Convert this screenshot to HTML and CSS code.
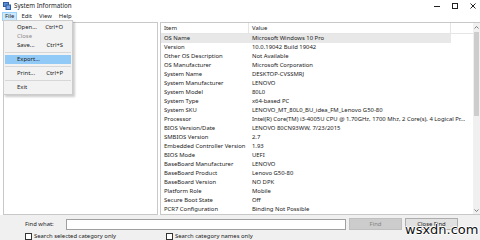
FILE: index.html
```html
<!DOCTYPE html>
<html lang="en">
<head>
    <meta charset="UTF-8">
    <title>System Information</title>
    <link rel="stylesheet" href="styles.css">
</head>
<body>
    <div class="window">
        <div class="titlebar">
            <svg class="app-icon" width="8" height="8" viewBox="0 0 8 8">
                <rect x="0.5" y="0.5" width="5" height="4" fill="#5b8fd6" stroke="#2c5aa0" stroke-width="1"/>
                <rect x="3" y="3" width="4.5" height="4.5" fill="#7aa7e6" stroke="#2c5aa0" stroke-width="1"/>
            </svg>
            <span class="title">System Information</span>
            <div class="controls">
                <svg width="8" height="8" viewBox="0 0 8 8"><line x1="1" y1="4.5" x2="7" y2="4.5" stroke="#222" stroke-width="1"/></svg>
                <svg width="8" height="8" viewBox="0 0 8 8"><rect x="1.5" y="1.5" width="5" height="5" fill="none" stroke="#222" stroke-width="1"/></svg>
                <svg width="8" height="8" viewBox="0 0 8 8"><path d="M1.5 1.5 L6.5 6.5 M6.5 1.5 L1.5 6.5" stroke="#222" stroke-width="1"/></svg>
            </div>
        </div>

        <div class="menubar">
            <span class="menu active">File</span>
            <span class="menu">Edit</span>
            <span class="menu">View</span>
            <span class="menu">Help</span>
        </div>

        <div class="main">
            <div class="tree"></div>
            <div class="details">
                <div class="list">
                    <div class="row head"><div class="cell">Item</div><div class="cell">Value</div></div>
                    <div class="row selected"><div class="cell">OS Name</div><div class="cell">Microsoft Windows 10 Pro</div></div>
                    <div class="row"><div class="cell">Version</div><div class="cell">10.0.19042 Build 19042</div></div>
                    <div class="row"><div class="cell">Other OS Description</div><div class="cell">Not Available</div></div>
                    <div class="row"><div class="cell">OS Manufacturer</div><div class="cell">Microsoft Corporation</div></div>
                    <div class="row"><div class="cell">System Name</div><div class="cell">DESKTOP-CVSSMRJ</div></div>
                    <div class="row"><div class="cell">System Manufacturer</div><div class="cell">LENOVO</div></div>
                    <div class="row"><div class="cell">System Model</div><div class="cell">80L0</div></div>
                    <div class="row"><div class="cell">System Type</div><div class="cell">x64-based PC</div></div>
                    <div class="row"><div class="cell">System SKU</div><div class="cell">LENOVO_MT_80L0_BU_idea_FM_Lenovo G50-80</div></div>
                    <div class="row"><div class="cell">Processor</div><div class="cell">Intel(R) Core(TM) i3-4005U CPU @ 1.70GHz, 1700 Mhz, 2 Core(s), 4 Logical Pr...</div></div>
                    <div class="row"><div class="cell">BIOS Version/Date</div><div class="cell">LENOVO 80CN93WW, 7/23/2015</div></div>
                    <div class="row"><div class="cell">SMBIOS Version</div><div class="cell">2.7</div></div>
                    <div class="row"><div class="cell">Embedded Controller Version</div><div class="cell">1.93</div></div>
                    <div class="row"><div class="cell">BIOS Mode</div><div class="cell">UEFI</div></div>
                    <div class="row"><div class="cell">BaseBoard Manufacturer</div><div class="cell">LENOVO</div></div>
                    <div class="row"><div class="cell">BaseBoard Product</div><div class="cell">Lenovo G50-80</div></div>
                    <div class="row"><div class="cell">BaseBoard Version</div><div class="cell">NO DPK</div></div>
                    <div class="row"><div class="cell">Platform Role</div><div class="cell">Mobile</div></div>
                    <div class="row"><div class="cell">Secure Boot State</div><div class="cell">Off</div></div>
                    <div class="row"><div class="cell">PCR7 Configuration</div><div class="cell">Binding Not Possible</div></div>
                </div>
                <div class="scrollbar">
                    <svg class="arrow" width="7" height="7" viewBox="0 0 7 7"><path d="M1.5 4.5 L3.5 2.5 L5.5 4.5" fill="none" stroke="#606060" stroke-width="0.8"/></svg>
                    <div class="track"><div class="thumb"></div></div>
                    <svg class="arrow" width="7" height="7" viewBox="0 0 7 7"><path d="M1.5 2.5 L3.5 4.5 L5.5 2.5" fill="none" stroke="#606060" stroke-width="0.8"/></svg>
                </div>
            </div>
        </div>

        <div class="findbar">
            <div class="find-row">
                <span class="find-label">Find what:</span>
                <div class="find-input"></div>
                <button class="btn disabled">Find</button>
                <button class="btn">Close Find</button>
            </div>
            <div class="check-row">
                <label class="check"><span class="box"></span>Search selected category only</label>
                <label class="check"><span class="box"></span>Search category names only</label>
            </div>
        </div>

        <div class="dropdown">
            <div class="item"><span>Open...</span><span class="key">Ctrl+O</span></div>
            <div class="item disabled"><span>Close</span></div>
            <div class="item"><span>Save...</span><span class="key">Ctrl+S</span></div>
            <div class="sep"></div>
            <div class="item hot"><span>Export...</span></div>
            <div class="sep"></div>
            <div class="item"><span>Print...</span><span class="key">Ctrl+P</span></div>
            <div class="sep"></div>
            <div class="item"><span>Exit</span></div>
        </div>

        <div class="watermark">wsxdn.com</div>
    </div>
</body>
</html>
```

FILE: styles.css
```css
body {
    margin: 0;
    font-family: "Noto Sans", "Open Sans", sans-serif;
    font-size: 5.9px;
    color: #1a1a1a;
    background: #ffffff;
}
.window {
    position: relative;
    width: 480px;
    height: 240px;
    overflow: hidden;
    display: flex;
    flex-direction: column;
    background: #ffffff;
}
.titlebar {
    height: 12px;
    display: flex;
    align-items: center;
    padding-left: 3px;
}
.app-icon {
    margin-right: 3px;
}
.title {
    font-size: 6.2px;
    color: #222;
}
.controls {
    margin-left: auto;
    display: flex;
    gap: 10px;
    padding-right: 3px;
    align-items: center;
}
.menubar {
    height: 10px;
    display: flex;
    align-items: center;
    padding-left: 2px;
}
.menu {
    padding: 0 3px;
    height: 9px;
    line-height: 9px;
    margin-right: 1px;
}
.menu.active {
    background: #cce8ff;
    box-shadow: inset 0 0 0 1px #99d1ff;
}
.main {
    height: 195px;
    margin-top: 1px;
    display: flex;
    gap: 2px;
    padding-left: 3px;
}
.tree {
    width: 153px;
    background: #ffffff;
    border: 1px solid #c8c8c8;
}
.details {
    flex: 1;
    display: flex;
    border: 1px solid #c8c8c8;
    border-right: none;
    overflow: hidden;
}
.list {
    flex: 1;
    overflow: hidden;
}
.row {
    display: grid;
    grid-template-columns: 88px 202px;
    height: 9px;
    line-height: 9px;
    white-space: nowrap;
}
.cell {
    padding-left: 3px;
    overflow: visible;
}
.row.head {
    height: 10px;
    line-height: 10px;
    border-bottom: 1px solid #e5e5e5;
    width: 100%;
}
.row.head .cell {
    border-right: 1px solid #e5e5e5;
}
.row.selected {
    background: #e8e8e8;
    width: 290px;
}
.scrollbar {
    width: 7px;
    background: #f0f0f0;
    display: flex;
    flex-direction: column;
    align-items: center;
    padding-top: 1px;
}
.track {
    flex: 1;
    width: 100%;
    padding: 1px 0 0 0;
}
.thumb {
    margin-left: 1px;
    width: 5px;
    height: 84px;
    background: #cdcdcd;
}
.findbar {
    flex: 1;
    background: #f0f0f0;
    padding: 3px 0 0 25px;
}
.find-row {
    display: flex;
    align-items: center;
    height: 12px;
}
.find-label {
    width: 41px;
}
.find-input {
    width: 280px;
    height: 11px;
    background: #ffffff;
    border: 1px solid #a0a0a0;
    box-sizing: border-box;
}
.btn {
    font-family: inherit;
    font-size: 5.9px;
    height: 12px;
    width: 53px;
    margin-left: 3px;
    padding: 0;
    background: #e1e1e1;
    border: 1px solid #adadad;
    color: #1a1a1a;
}
.btn.disabled {
    background: #cccccc;
    border-color: #bfbfbf;
    color: #838383;
}
.check-row {
    display: flex;
    margin-top: 2px;
    height: 8px;
    align-items: center;
}
.check {
    display: flex;
    align-items: center;
    gap: 2px;
    width: 141px;
}
.box {
    width: 5px;
    height: 5px;
    border: 1px solid #333;
    background: #ffffff;
}
.dropdown {
    position: absolute;
    left: 3px;
    top: 20px;
    width: 68px;
    padding: 2px 0;
    background: #f2f2f2;
    border: 1px solid #cccccc;
    box-shadow: 2px 2px 2px rgba(0, 0, 0, 0.2);
}
.item {
    display: flex;
    height: 9px;
    line-height: 9px;
    padding-left: 12px;
    margin: 0 1px;
}
.item .key {
    margin-left: auto;
    padding-right: 8px;
}
.item.disabled {
    color: #8c8c8c;
}
.item.hot {
    background: #91c9f7;
}
.sep {
    height: 1px;
    background: #d7d7d7;
    margin: 2px 1px 2px 1px;
}
.watermark {
    position: absolute;
    left: 405px;
    top: 222px;
    font-family: "DejaVu Sans", sans-serif;
    font-size: 13px;
    color: #111;
    text-shadow: 1px 0 0 #fff, -1px 0 0 #fff, 0 1px 0 #fff, 0 -1px 0 #fff;
}
```
